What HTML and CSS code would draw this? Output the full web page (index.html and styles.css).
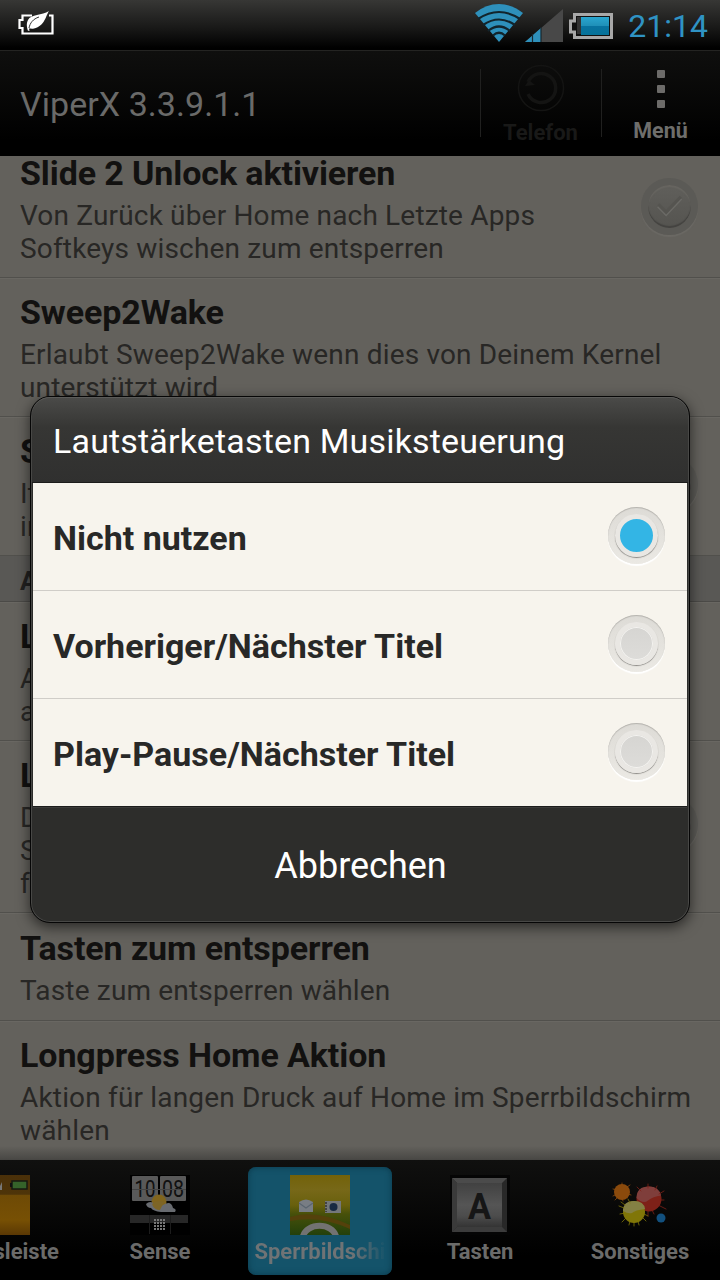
FILE: index.html
```html
<!DOCTYPE html>
<html lang="de">
<head>
    <meta charset="UTF-8">
    <meta name="viewport" content="width=device-width, initial-scale=1.0">
    <title>ViperX 3.3.9.1.1</title>
    <link rel="stylesheet" href="styles.css">
</head>
<body>
    <div class="screen">
        <div class="statusbar">
            <svg class="saver" width="38" height="26" viewBox="0 0 38 26">
                <path d="M15 4.500H5.500V9H2.500v8h3v5.500h30V4.500H32" fill="none" stroke="#fff" stroke-width="2.200"/>
                <path d="M32 0C29 4 28 15 17 17.500c-2 .5-4 0-5 0L12.500 20 10.800 19.500C10 16 9 13 11 9 14 3 25 4.500 32 0z" fill="#fff"/>
                <path d="M12 17c1-5 4-9 10-11" fill="none" stroke="#333" stroke-width="1"/>
            </svg>
            <div class="status-icons">
                <svg width="50" height="40" viewBox="0 0 50 40">
                    <path d="M25 39L1 10Q12 1 25 1T49 10z" fill="#2e90bb"/>
                    <g fill="none" stroke="#12242c" stroke-width="2.200">
                        <path d="M4 16Q25 2 46 16"/>
                        <path d="M9 22Q25 11 41 22"/>
                        <path d="M14 28Q25 19 36 28"/>
                        <path d="M19 32.500Q25 27 31 32.500"/>
                    </g>
                </svg>
                <svg width="38" height="33" viewBox="0 0 38 33">
                    <path d="M0 33L38 0V33z" fill="#484848"/>
                    <path d="M0 33L16 19V33z" fill="#2e90bb"/>
                    <path d="M7.500 25v8M16 18v15" stroke="#182830" stroke-width="1.200"/>
                </svg>
                <svg width="44" height="26" viewBox="0 0 44 26">
                    <defs>
                        <linearGradient id="cell" x1="0" y1="0" x2="0" y2="1">
                            <stop offset="0" stop-color="#2aa6cf"/>
                            <stop offset=".5" stop-color="#1f90b8"/>
                            <stop offset=".52" stop-color="#0873a0"/>
                            <stop offset="1" stop-color="#067299"/>
                        </linearGradient>
                    </defs>
                    <path d="M5.500 1.500h37v23h-37v-5.500h-4V8h4z" fill="#111" stroke="#a8a8a8" stroke-width="3"/>
                    <rect x="8" y="4" width="5" height="17" fill="#333"/>
                    <rect x="12" y="4" width="28" height="18" fill="url(#cell)"/>
                </svg>
                <span class="clock">21:14</span>
            </div>
        </div>

        <div class="actionbar">
            <h1>ViperX 3.3.9.1.1</h1>
            <div class="action off">
                <svg width="48" height="48" viewBox="0 0 48 48" fill="none" stroke="#141413">
                    <circle cx="24" cy="24" r="22.500" stroke-width="1.500"/>
                    <path d="M11 18a14.500 14.500 0 1 1 0 12" stroke-width="3.500"/>
                    <path d="M8 22l4-6 6 5z" fill="#141413" stroke="none"/>
                </svg>
                <span>Telefon</span>
            </div>
            <div class="action menu">
                <div class="dots"><i></i><i></i><i></i></div>
                <span>Menü</span>
            </div>
        </div>

        <div class="list">
            <div class="rows">
                <div class="row">
                    <div class="text">
                        <h2>Slide 2 Unlock aktivieren</h2>
                        <p>Von Zurück über Home nach Letzte Apps<br>Softkeys wischen zum entsperren</p>
                    </div>
                    <div class="check">
                        <svg width="44" height="44" viewBox="0 0 44 44" fill="none">
                            <path d="M7 22l10 10 19-20" stroke="#6b6a66" stroke-width="5"/>
                            <path d="M7 20l10 10 19-20" stroke="#555450" stroke-width="4"/>
                        </svg>
                    </div>
                </div>
                <div class="row">
                    <div class="text">
                        <h2>Sweep2Wake</h2>
                        <p>Erlaubt Sweep2Wake wenn dies von Deinem Kernel<br>unterstützt wird</p>
                    </div>
                </div>
                <div class="row">
                    <div class="text">
                        <h2>S</h2>
                        <p>It<br>in</p>
                    </div>
                    <div class="check"></div>
                </div>
                <div class="section">A</div>
                <div class="row">
                    <div class="text">
                        <h2>L</h2>
                        <p>A<br>a</p>
                    </div>
                </div>
                <div class="row">
                    <div class="text">
                        <h2>L</h2>
                        <p>D<br>S<br>f</p>
                    </div>
                    <div class="check"></div>
                </div>
                <div class="row">
                    <div class="text">
                        <h2>Tasten zum entsperren</h2>
                        <p>Taste zum entsperren wählen</p>
                    </div>
                </div>
                <div class="row">
                    <div class="text">
                        <h2>Longpress Home Aktion</h2>
                        <p>Aktion für langen Druck auf Home im Sperrbildschirm<br>wählen</p>
                    </div>
                </div>
            </div>
        </div>

        <div class="tabs">
            <div class="tab">
                <svg width="60" height="60" viewBox="0 0 60 60">
                    <defs>
                        <linearGradient id="gold" x1="0" y1="0" x2="0" y2="1">
                            <stop offset="0" stop-color="#4a3009"/>
                            <stop offset=".32" stop-color="#4e3409"/>
                            <stop offset=".34" stop-color="#6e4a06"/>
                            <stop offset=".75" stop-color="#775004"/>
                            <stop offset="1" stop-color="#5a3804"/>
                        </linearGradient>
                    </defs>
                    <rect width="60" height="60" fill="url(#gold)"/>
                    <path d="M28 15l4-8v8z" fill="#777"/>
                    <rect x="42" y="6" width="15" height="8" fill="#35632a" stroke="#171a12" stroke-width="1.500"/>
                    <path d="M41 8v4" stroke="#111" stroke-width="2"/>
                </svg>
                <span>Statusleiste</span>
            </div>
            <div class="tab">
                <svg width="60" height="60" viewBox="0 0 60 60">
                    <rect width="60" height="60" fill="#000"/>
                    <rect x="2" y="1" width="26" height="25" rx="1" fill="#595959"/>
                    <rect x="30" y="1" width="26" height="25" rx="1" fill="#595959"/>
                    <text x="15" y="21.500" class="flip" textLength="21" lengthAdjust="spacingAndGlyphs">10</text>
                    <text x="43" y="21.500" class="flip" textLength="22" lengthAdjust="spacingAndGlyphs">08</text>
                    <path d="M2 14.500h54" stroke="#444" stroke-width="1"/>
                    <circle cx="29" cy="27" r="7.500" fill="#81651d"/>
                    <path d="M16 29q4-4 9 0 3 5 8 1 8-5 10 3 4 1 2 4H31q-8-1-10-4-4 0-5-4z" fill="#686b70"/>
                    <path d="M22 29q5-5 12-2l-4 8q-6 0-8-6z" fill="#7d6526"/>
                    <rect y="40" width="58" height="8" fill="#272727"/>
                    <path d="M19.500 40v19M40.500 40v19" stroke="#1c1c1c"/>
                    <path d="M24 45h11M24 48h11M24 51h11M24 54h11" stroke="#777" stroke-width="2" stroke-dasharray="2 1"/>
                </svg>
                <span>Sense</span>
            </div>
            <div class="tab active">
                <svg width="60" height="60" viewBox="0 0 60 60">
                    <defs>
                        <linearGradient id="field" x1="0" y1="0" x2="0" y2="1">
                            <stop offset="0" stop-color="#73620a"/>
                            <stop offset=".25" stop-color="#776818"/>
                            <stop offset=".5" stop-color="#69600d"/>
                            <stop offset=".65" stop-color="#47500a"/>
                            <stop offset="1" stop-color="#23400b"/>
                        </linearGradient>
                    </defs>
                    <rect width="60" height="60" fill="url(#field)"/>
                    <path d="M0 42q25-8 60 8v4Q30 40 0 46z" fill="#54410b"/>
                    <path d="M9 27q7-5 14 0v10H9z" fill="#787d84"/>
                    <path d="M9 28l7 5 7-5" fill="none" stroke="#5a6570" stroke-width="1.200"/>
                    <rect x="35" y="26" width="16" height="12" fill="#74777a"/>
                    <path d="M36 27v10" stroke="#333" stroke-width="1.500" stroke-dasharray="2 1"/>
                    <circle cx="43.500" cy="32" r="4" fill="#182a42"/>
                    <path d="M13 61a17 13.500 0 0 1 33 0" fill="none" stroke="#727272" stroke-width="6"/>
                </svg>
                <span class="fade">Sperrbildschi</span>
            </div>
            <div class="tab">
                <svg width="60" height="60" viewBox="0 0 60 60">
                    <defs>
                        <linearGradient id="key" x1="0" y1="0" x2="0" y2="1">
                            <stop offset="0" stop-color="#414141"/>
                            <stop offset=".5" stop-color="#555"/>
                            <stop offset=".75" stop-color="#4c4c4c"/>
                            <stop offset="1" stop-color="#343434"/>
                        </linearGradient>
                    </defs>
                    <rect width="60" height="60" fill="#050505"/>
                    <rect x="2" y="3" width="55" height="54" fill="#282828"/>
                    <path d="M2 3h55l-5 5H7z" fill="#4b4b4b"/>
                    <path d="M2 57h55l-5-5H7z" fill="#3c3c3c"/>
                    <path d="M2 3l5 5v44l-5 5z" fill="#3a3a3a"/>
                    <rect x="7" y="8" width="45" height="44" fill="url(#key)"/>
                    <text x="29.500" y="44" class="key-letter" textLength="23" lengthAdjust="spacingAndGlyphs">A</text>
                </svg>
                <span>Tasten</span>
            </div>
            <div class="tab">
                <svg width="60" height="60" viewBox="0 0 60 60">
                    <g stroke-linecap="round" stroke-width=".8">
                        <circle cx="12" cy="17" r="8" fill="#8a4a0c"/>
                        <path d="M3 14l4 1M3 21l4-2M5 25l3-3M20 10l-3 2M12 8v3M13 26l-1-3M21 20l-3-1" stroke="#8a4a0c"/>
                        <circle cx="39" cy="24" r="12.500" fill="#7e2118"/>
                        <path d="M26.500 23q0-11.500 12.500-11.500 10 0 12 9-8 1-13 5t-11.500-2.500z" fill="#7f3e3b"/>
                        <path d="M27 12l4 4M38 9v4M47 11l-2 4M54 16l-5 3M54 25h-4M56 34l-8-4M44 39l-2-4M38 41v-5" stroke="#7e2118"/>
                        <circle cx="24" cy="37" r="11" fill="#807608"/>
                        <path d="M13 36q0-10 11-10 10 0 11 8-10 1-13 4-4 1-9-2z" fill="#848044"/>
                        <path d="M9 31l5 2M10 39l5-1M12 47l4-4M19 50l1-4M24 51v-5M29 50l-1-4M36 46l-4-4M38 41l-4-2M18 24l2 4M11 27l4 3" stroke="#807608"/>
                        <circle cx="51" cy="43" r="4.500" fill="#12507e"/>
                    </g>
                </svg>
                <span>Sonstiges</span>
            </div>
        </div>

        <div class="dialog">
            <div class="dialog-title">Lautstärketasten Musiksteuerung</div>
            <div class="option">
                <span>Nicht nutzen</span>
                <div class="radio on"><i></i></div>
            </div>
            <div class="option">
                <span>Vorheriger/Nächster Titel</span>
                <div class="radio"><i></i></div>
            </div>
            <div class="option">
                <span>Play-Pause/Nächster Titel</span>
                <div class="radio"><i></i></div>
            </div>
            <div class="cancel">Abbrechen</div>
        </div>
    </div>
</body>
</html>
```
FILE: styles.css
```css
body {
    margin: 0;
    background: #000;
    font-family: Roboto, "Liberation Sans", sans-serif;
}
.screen {
    position: relative;
    display: flex;
    flex-direction: column;
    width: 720px;
    height: 1280px;
    overflow: hidden;
}

/* status bar */
.statusbar {
    display: flex;
    justify-content: space-between;
    box-sizing: border-box;
    height: 50px;
    padding: 0 12px 0 17px;
    background: linear-gradient(#373735, #191918 55%, #000 96%);
}
.saver {
    margin-top: 11px;
}
.status-icons {
    display: flex;
    align-items: flex-start;
}
.status-icons svg {
    flex: none;
}
.status-icons svg:nth-child(1) {
    margin-top: 3px;
}
.status-icons svg:nth-child(2) {
    margin: 9px 6px 0 1px;
}
.status-icons svg:nth-child(3) {
    margin: 13px 15px 0 0;
}
.clock {
    font-size: 32px;
    line-height: 53px;
    color: #2f93c4;
}

/* action bar */
.actionbar {
    display: flex;
    align-items: center;
    box-sizing: border-box;
    height: 106px;
    border-top: 1px solid #242422;
    background: linear-gradient(#0f0f0e, #000 85%);
}
.actionbar h1 {
    flex: 1;
    margin: 0 0 0 20px;
    font-size: 34px;
    font-weight: 400;
    color: #6a6a69;
    letter-spacing: 0.05px;
}
.action {
    position: relative;
    display: flex;
    flex-direction: column;
    align-items: center;
    justify-content: flex-end;
    width: 121px;
    height: 105px;
    box-sizing: border-box;
    padding-bottom: 11px;
    font-size: 22px;
    font-weight: 700;
    line-height: 28px;
    color: #6e6e6c;
}
.action::before {
    content: "";
    position: absolute;
    left: 0;
    top: 18px;
    width: 1px;
    height: 68px;
    background: #20201f;
}
.action.off {
    color: #191918;
    padding-bottom: 9px;
}
.action.menu {
    width: 119px;
    font-size: 21.5px;
}
.action svg {
    margin-bottom: 7px;
}
.dots {
    display: flex;
    flex-direction: column;
    gap: 7px;
    margin-bottom: 9px;
}
.dots i {
    width: 8px;
    height: 8px;
    border-radius: 1px;
    background: #6c6b69;
}

/* settings list */
.list {
    position: relative;
    height: 1004px;
    overflow: hidden;
    background: #63615c;
}
.list::after {
    content: "";
    position: absolute;
    left: 0;
    right: 0;
    bottom: 0;
    height: 14px;
    background: linear-gradient(rgba(60, 59, 56, 0), #484744);
}
.rows {
    margin-top: -17px;
}
.row {
    display: flex;
    align-items: center;
    justify-content: space-between;
    box-sizing: border-box;
    min-height: 108px;
    padding: 14px 22px 12px 20px;
    border-bottom: 1px solid #51504c;
    box-shadow: inset 0 1px #696762;
}
.row h2 {
    margin: 0 0 6px;
    font-size: 34px;
    line-height: 40px;
    font-weight: 700;
    letter-spacing: -0.1px;
    color: #121110;
}
.row p {
    margin: 0;
    font-size: 28px;
    line-height: 33px;
    letter-spacing: 0.17px;
    color: #282725;
    white-space: nowrap;
}
.section {
    box-sizing: border-box;
    height: 46px;
    padding-left: 20px;
    border-bottom: 1px solid #4b4a47;
    background: #595855;
    font-size: 26px;
    line-height: 50px;
    font-weight: 700;
    color: #222120;
}
.check {
    display: flex;
    align-items: center;
    justify-content: center;
    flex: none;
    box-sizing: border-box;
    width: 57px;
    height: 57px;
    margin-bottom: 6px;
    border-radius: 50%;
    border: 7px solid #5b5a56;
    background: linear-gradient(#605f5b, #555450);
    box-shadow: 0 2px 1px #6b6964, inset 0 -2px 1px #444340, inset 0 2px 1px #676560;
}
.check svg {
    width: 34px;
    height: 34px;
    flex: none;
}

/* bottom tabs */
.tabs {
    display: flex;
    flex: none;
    width: 800px;
    height: 120px;
    margin-left: -80px;
    box-sizing: border-box;
    padding: 7px 0 5px;
    background: linear-gradient(#10100f, #000 80%);
}
.tab {
    display: flex;
    flex-direction: column;
    align-items: center;
    box-sizing: border-box;
    width: 144px;
    margin: 0 8px;
    padding-top: 8px;
    border-radius: 8px;
    font-size: 22px;
    font-weight: 700;
    line-height: 34px;
    color: #6b6b6a;
}
.tab svg {
    flex: none;
}
.tab.active {
    background: #14536a;
    box-shadow: inset 0 0 6px #0b3a4c;
}
.fade {
    background: linear-gradient(90deg, #6f7375 75%, #14536a);
    -webkit-background-clip: text;
    background-clip: text;
    color: transparent;
}
.flip {
    font-size: 23px;
    font-weight: 400;
    text-anchor: middle;
    fill: #101010;
}
.key-letter {
    font-size: 37px;
    font-weight: 700;
    text-anchor: middle;
    fill: #161616;
}

/* dialog */
.dialog {
    position: absolute;
    left: 30px;
    top: 396px;
    width: 660px;
    height: 527px;
    box-sizing: border-box;
    border: 1px solid #060606;
    border-radius: 20px;
    padding: 0 2px;
    background: #2d2d2b;
    box-shadow: inset 0 0 0 1px #484846, 0 4px 14px rgba(0, 0, 0, 0.6);
}
.dialog-title {
    height: 86px;
    margin: 0 -1px;
    box-sizing: border-box;
    padding-left: 21px;
    border-top: 1px solid #5b5b59;
    border-bottom: 1px solid #1c1c1b;
    border-radius: 18px 18px 0 0;
    background: linear-gradient(#4a4a48, #363634 35%, #30302f);
    font-size: 34px;
    line-height: 87px;
    letter-spacing: 0.17px;
    color: #fff;
}
.option {
    display: flex;
    align-items: center;
    justify-content: space-between;
    box-sizing: border-box;
    height: 108px;
    padding: 0 22px 0 20px;
    border-bottom: 1px solid #d0cdc8;
    background: #f7f4ed;
    font-size: 34px;
    font-weight: 700;
    color: #282827;
}
.option span {
    padding-top: 3px;
}
.radio {
    display: flex;
    align-items: center;
    justify-content: center;
    width: 57px;
    height: 57px;
    margin-bottom: 2px;
    border-radius: 50%;
    background: linear-gradient(#dddbd6, #ebe9e4);
    box-shadow: 0 2px 1px #fff, inset 0 1px 1px #b5b3ae;
}
.radio i {
    box-sizing: border-box;
    width: 43px;
    height: 43px;
    border-radius: 50%;
    border: 5px solid #e9e7e3;
    background: linear-gradient(#d6d5d2, #dddcd9);
    box-shadow: 0 1px 1px #8b8985, inset 0 0 0 1px #f4f3f0;
}
.radio.on i {
    background: #33b5e5;
    box-shadow: 0 1px 1px #8b8985;
}
.option:nth-child(4) {
    border-bottom: 1px solid #1c1c1b;
}
.cancel {
    height: 113px;
    border-top: 1px solid #3b3b39;
    font-size: 36px;
    line-height: 116px;
    padding-left: 1px;
    text-align: center;
    color: #fff;
}
```
